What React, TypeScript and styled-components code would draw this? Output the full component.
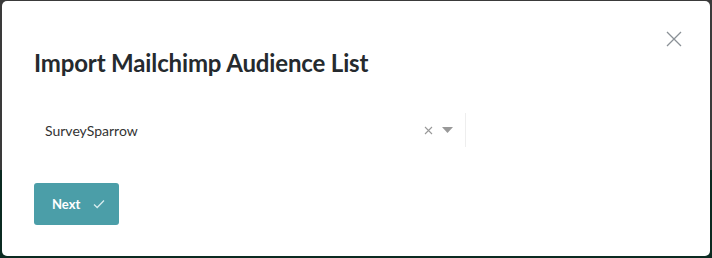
import React from 'react';
import styled, { createGlobalStyle } from 'styled-components';

const GlobalStyle = createGlobalStyle`
  html, body {
    margin: 0;
    padding: 0;
  }
  body {
    background: linear-gradient(#3a3a3a 0, #3a3a3a 170px, #0b2a21 170px);
    font-family: "Lato", "Open Sans", sans-serif;
  }
`;

const Backdrop = styled.div`
  width: 712px;
  height: 258px;
  box-sizing: border-box;
  padding: 1px 2px 2px 2px;
`;

const Modal = styled.div`
  position: relative;
  height: 100%;
  box-sizing: border-box;
  background-color: white;
  border-radius: 5px;
  padding: 46px 32px 0 32px;
`;

const CloseButton = styled.button`
  position: absolute;
  top: 26px;
  right: 24px;
  width: 24px;
  height: 24px;
  padding: 0;
  border: 0;
  background: transparent;
  cursor: pointer;
  display: flex;
  align-items: center;
  justify-content: center;
`;

const Title = styled.h2`
  margin: 0;
  font-size: 24px;
  font-weight: 700;
  line-height: 32px;
  color: #252a2e;
  letter-spacing: -0.15px;
`;

const SelectBox = styled.div`
  margin-top: 33px;
  width: 432px;
  height: 36px;
  display: flex;
  align-items: center;
`;

const SelectValue = styled.div`
  flex: 1;
  padding-left: 11px;
  font-size: 14px;
  color: #333;
`;

const Indicators = styled.div`
  display: flex;
  align-items: center;
  height: 100%;
  gap: 9px;
`;

const Separator = styled.span`
  width: 1px;
  height: 34px;
  margin-left: 3px;
  background-color: #eeeeee;
`;

const NextButton = styled.button`
  margin-top: 35px;
  width: 85px;
  height: 42px;
  border: 0;
  border-radius: 3px;
  background-color: #4b9ea8;
  color: white;
  font-family: "Lato", sans-serif;
  font-size: 13px;
  font-weight: 700;
  display: flex;
  align-items: center;
  padding: 0 0 0 18px;
  gap: 13px;
  cursor: pointer;
`;

const App = () => {
  return (
    <>
      <GlobalStyle />
      <Backdrop>
        <Modal>
          <CloseButton aria-label="Close">
            <svg width="16" height="16" viewBox="0 0 16 16">
              <path d="M1 1L15 15M15 1L1 15" stroke="#8a9096" strokeWidth="1.3" />
            </svg>
          </CloseButton>
          <Title>Import Mailchimp Audience List</Title>
          <SelectBox>
            <SelectValue>SurveySparrow</SelectValue>
            <Indicators>
              <svg width="9" height="9" viewBox="0 0 9 9">
                <path d="M1 1L8 8M8 1L1 8" stroke="#999" strokeWidth="1.1" />
              </svg>
              <svg width="11" height="6" viewBox="0 0 11 6">
                <path d="M0 0H11L5.5 6Z" fill="#999" />
              </svg>
              <Separator />
            </Indicators>
          </SelectBox>
          <NextButton>
            Next
            <svg width="12" height="10" viewBox="0 0 12 10">
              <path d="M1 5.5L4.2 8.5L11 1.5" fill="none" stroke="#d6ecee" strokeWidth="1.3" />
            </svg>
          </NextButton>
        </Modal>
      </Backdrop>
    </>
  );
};

export default App;
